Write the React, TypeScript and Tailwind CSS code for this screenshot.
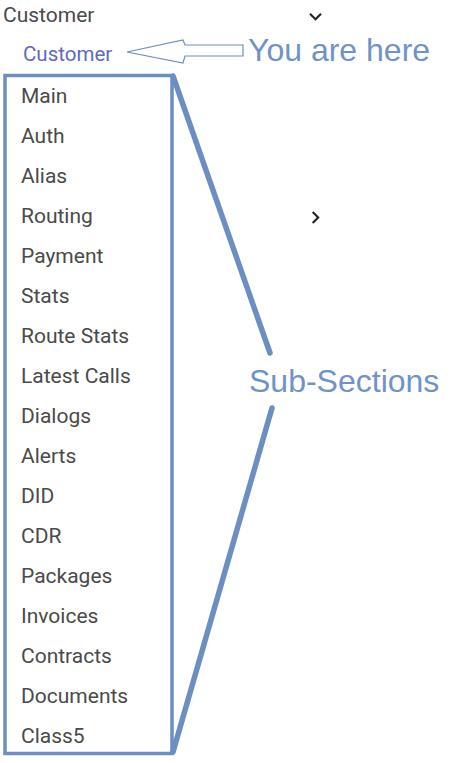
import { MdExpandMore, MdChevronRight } from "react-icons/md";

const sections = [
  "Main",
  "Auth",
  "Alias",
  "Routing",
  "Payment",
  "Stats",
  "Route Stats",
  "Latest Calls",
  "Dialogs",
  "Alerts",
  "DID",
  "CDR",
  "Packages",
  "Invoices",
  "Contracts",
  "Documents",
  "Class5",
];

export default function App() {
  return (
    <div className="relative w-[454px] h-[763px] bg-white overflow-hidden font-['Roboto',sans-serif] text-[21px] text-[#4a4a4a]">
      {/* nav */}
      <div className="w-[340px] flex flex-col">
        <div className="h-8 flex items-center justify-between pl-[3px] pr-3">
          <span>Customer</span>
          <MdExpandMore size={25} className="text-[#222]" />
        </div>
        <div className="h-[45px] flex items-center pl-[23px] text-[#5c6bc0] text-[20.5px]">Customer</div>
        {sections.map((s) => (
          <div key={s} className="h-10 flex items-center justify-between pl-[21px] pr-3">
            <span>{s}</span>
            {s === "Routing" && <MdChevronRight size={25} className="text-[#222]" />}
          </div>
        ))}
      </div>

      {/* annotations */}
      <svg className="absolute inset-0 pointer-events-none" width={454} height={763} viewBox="0 0 454 763">
        <rect x={5} y={75.5} width={167} height={678} fill="none" stroke="#6b8fc2" strokeWidth={3.5} />
        <line x1={173} y1={76} x2={270} y2={353} stroke="#6b8fc2" strokeWidth={5.5} strokeLinecap="round" />
        <line x1={272} y1={408} x2={173} y2={752} stroke="#6b8fc2" strokeWidth={5.5} strokeLinecap="round" />
        <path
          d="M127 52 L183 40 L185 45 L243 45 L243 56 L185 56 L183 63 Z"
          fill="white"
          stroke="#6b8fc2"
          strokeWidth={1.2}
          strokeLinejoin="miter"
        />
      </svg>
      <div className="absolute left-[248px] top-[34px] leading-none text-[32px] text-[#6f93c8] font-['Liberation_Sans',Arial,sans-serif] whitespace-nowrap">
        You are here
      </div>
      <div className="absolute left-[249px] top-[365px] leading-none text-[32px] text-[#6f93c8] font-['Liberation_Sans',Arial,sans-serif] whitespace-nowrap">
        Sub-Sections
      </div>
    </div>
  );
}
